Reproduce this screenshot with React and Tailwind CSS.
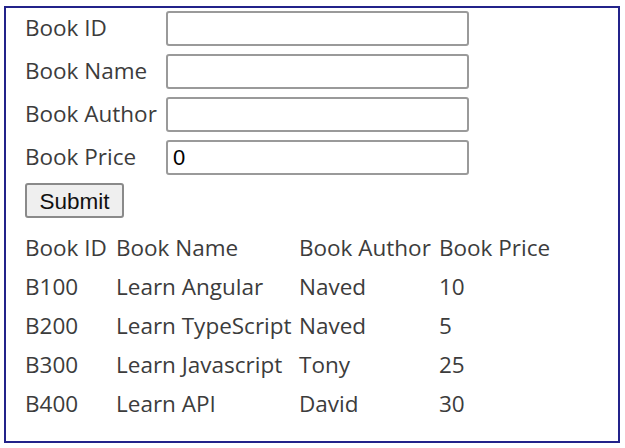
const books = [
  { id: "B100", name: "Learn Angular", author: "Naved", price: 10 },
  { id: "B200", name: "Learn TypeScript", author: "Naved", price: 5 },
  { id: "B300", name: "Learn Javascript", author: "Tony", price: 25 },
  { id: "B400", name: "Learn API", author: "David", price: 30 },
];

const fields = [
  { label: "Book ID", value: "" },
  { label: "Book Name", value: "" },
  { label: "Book Author", value: "" },
  { label: "Book Price", value: "0" },
];

export default function App() {
  return (
    <div className="w-[625px] h-[448px] bg-white overflow-hidden pt-[6px] pl-[4px]">
      <div className="w-[616px] h-[437px] border-2 border-[#23238a] pl-[19px] pt-[3px] font-['Open_Sans',sans-serif] text-[#3c3c3c] text-[22.5px]">
        {/* Form */}
        <div className="flex flex-col gap-[8px]">
          {fields.map((f) => (
            <div key={f.label} className="flex items-center h-[35px]">
              <label className="w-[141px] leading-none whitespace-nowrap">{f.label}</label>
              <input
                defaultValue={f.value}
                className="w-[303px] h-[35px] border-2 border-[#9a9a9a] rounded-[3px] px-[5px] font-['Liberation_Sans',sans-serif] text-[22px] text-black outline-none"
              />
            </div>
          ))}
          <div>
            <button className="w-[99px] h-[35px] bg-[#efefef] border-2 border-[#8a8a8a] rounded-[3px] font-['Liberation_Sans',sans-serif] text-[22.5px] text-[#111]">
              Submit
            </button>
          </div>
        </div>

        {/* Book list */}
        <table className="mt-[10px] border-collapse">
          <thead>
            <tr className="h-[39px]">
              <th className="w-[91px] p-0 text-left font-normal whitespace-nowrap">Book ID</th>
              <th className="w-[183px] p-0 text-left font-normal whitespace-nowrap">Book Name</th>
              <th className="w-[140px] p-0 text-left font-normal whitespace-nowrap">Book Author</th>
              <th className="p-0 text-left font-normal whitespace-nowrap">Book Price</th>
            </tr>
          </thead>
          <tbody>
            {books.map((b) => (
              <tr key={b.id} className="h-[39px]">
                <td className="p-0 whitespace-nowrap">{b.id}</td>
                <td className="p-0 whitespace-nowrap">{b.name}</td>
                <td className="p-0 whitespace-nowrap">{b.author}</td>
                <td className="p-0 whitespace-nowrap">{b.price}</td>
              </tr>
            ))}
          </tbody>
        </table>
      </div>
    </div>
  );
}
